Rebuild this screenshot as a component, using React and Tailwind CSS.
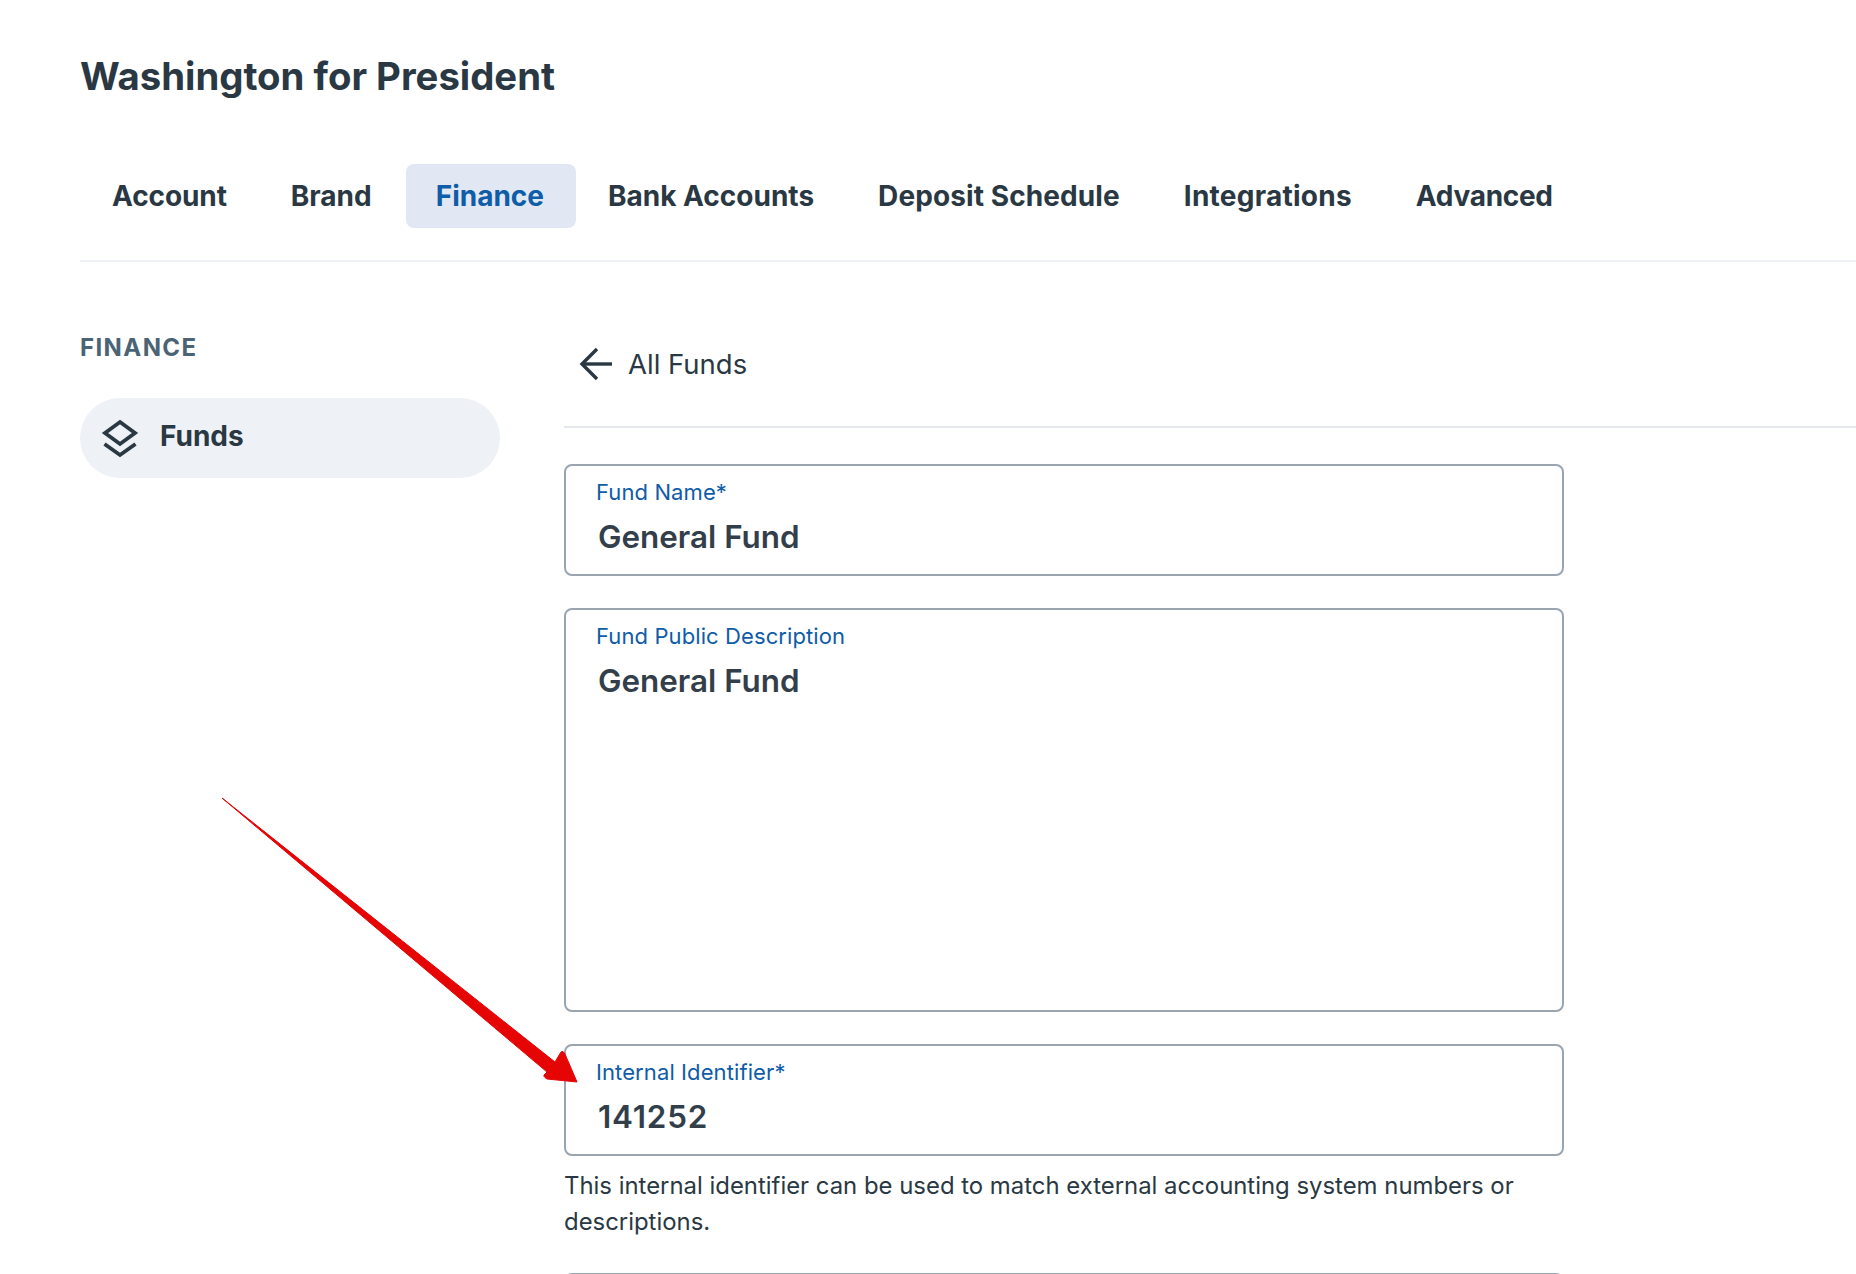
const TABS = [
  { label: 'Account', className: 'tracking-[-0.1px]' },
  { label: 'Brand', className: 'pr-[34px]' },
  { label: 'Finance', className: 'pl-[30px] bg-[#e1e8f3] text-[#0f5ca8]' },
  { label: 'Bank Accounts' },
  { label: 'Deposit Schedule', className: 'tracking-[0.1px]' },
  { label: 'Integrations', className: 'tracking-[0.25px]' },
  { label: 'Advanced', className: 'tracking-[-0.3px]' },
]

const Field = ({ label, value, className = 'h-[112px]', valueClassName = '' }) => (
  <div className={`w-[1000px] border-2 border-[#9aa5b1] rounded-lg pl-[30px] pt-[12px] ${className}`}>
    <div className="text-[22px] leading-[28px] tracking-[0.1px] text-[#0f5ca8]">{label}</div>
    <div className={`mt-[11px] pl-[2px] text-[31.4px] leading-[40px] font-semibold text-[#323f4b] ${valueClassName}`}>{value}</div>
  </div>
)

export default function App() {
  return (
    <div className="relative w-[1856px] h-[1274px] overflow-hidden bg-white pl-[80px] pt-[52px] font-['Inter',sans-serif] text-[#2a3843]">
      <h1 className="h-[48px] text-[38.3px] leading-[48px] font-bold">Washington for President</h1>

      {/* Tabs */}
      <nav className="mt-[64px] pb-[32px] border-b-2 border-[#eef2f6] flex">
        {TABS.map(tab => (
          <div
            key={tab.label}
            className={`h-[64px] px-[32px] flex items-center rounded-lg text-[28px] font-bold ${tab.className ?? ''}`}
          >
            {tab.label}
          </div>
        ))}
      </nav>

      <div className="flex gap-[64px]">
        {/* Sidebar */}
        <aside className="w-[420px] shrink-0 pt-[70px]">
          <div className="text-[24px] leading-[32px] font-bold tracking-[1.4px] text-[#4b6475]">FINANCE</div>
          <div className="mt-[34px] h-[80px] rounded-[40px] bg-[#eef1f5] flex items-center pl-[20px] gap-[20px]">
            <svg width="40" height="40" viewBox="0 0 40 40" fill="none" stroke="#2a3843" strokeWidth="3.8">
              <path d="M20 4 L35 15 L20 26 L5 15 Z" />
              <path d="M4.5 26 L20 37 L35.5 26" />
            </svg>
            <span className="text-[28px] font-bold pb-[4px]">Funds</span>
          </div>
        </aside>

        {/* Form */}
        <main className="flex-1">
          <div className="mt-[42px] h-[124px] pb-[1px] border-b-2 border-[#e4e7eb] flex items-center">
            <svg className="ml-[15px] mb-[2px]" width="34" height="34" viewBox="0 0 34 34" fill="none" stroke="#2a3843" strokeWidth="3.4">
              <path d="M33 17 H3" />
              <path d="M18 2 L3 17 L18 32" />
            </svg>
            <span className="ml-[15px] text-[27.5px]">All Funds</span>
          </div>

          <div className="mt-[36px] flex flex-col gap-[32px]">
            <Field label="Fund Name*" value="General Fund" />
            <Field label="Fund Public Description" value="General Fund" className="h-[404px]" />
            <Field label="Internal Identifier*" value="141252" valueClassName="tracking-[0.8px]" />
          </div>
          <p className="mt-[12px] w-[1000px] text-[23.9px] leading-[36px]">
            This internal identifier can be used to match external accounting system numbers or descriptions.
          </p>
          <div className="mt-[33px] w-[1000px] h-[112px] border-2 border-[#9aa5b1] rounded-lg" />
        </main>
      </div>

      {/* Annotation arrow */}
      <svg className="absolute left-0 top-0 pointer-events-none" width="1856" height="1274">
        <path
          d="M222 798 L555 1062 L561 1052 Q563 1050 565 1054 L577 1082 L547 1079 Q542 1076 545 1074 L547 1072 Z"
          fill="#e60505"
          stroke="#e60505"
          strokeWidth="1"
          strokeLinejoin="round"
        />
      </svg>
    </div>
  )
}
